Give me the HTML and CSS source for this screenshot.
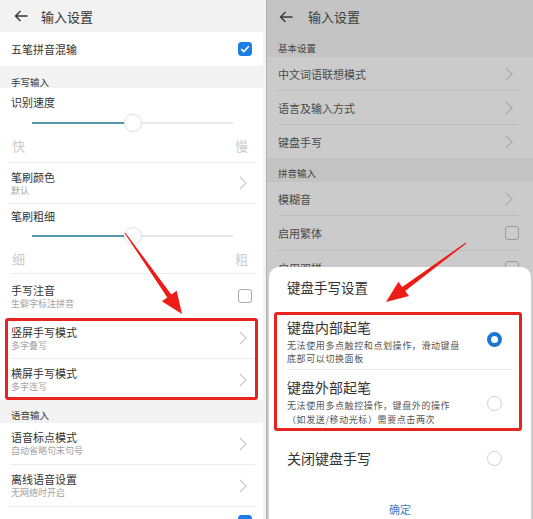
FILE: index.html
```html
<!DOCTYPE html>
<html lang="zh-CN">
<head>
<meta charset="utf-8">
<title>输入设置</title>
<link rel="stylesheet" href="styles.css">
</head>
<body>
<div class="page">
  <section class="phone left">
    <header class="bar">
      <svg class="back" width="14" height="12" viewBox="0 0 14 12"><path d="M13.5 6H1.5M6.5 1L1.5 6l5 5" stroke="#333" stroke-width="1.4" fill="none"/></svg>
      <span>输入设置</span>
    </header>
    <div class="item h34 nob"><span class="tt">五笔拼音混输</span><span class="cb on"><svg width="10" height="8" viewBox="0 0 10 8"><path d="M1.2 4l2.6 2.5L8.8 1.3" stroke="#fff" stroke-width="1.6" fill="none"/></svg></span></div>
    <div class="sec s22">手写输入</div>
    <div class="item slider-row r1">
      <div class="tt">识别速度</div>
      <div class="slider"><div class="fill" style="width:92px"></div><div class="thumb" style="left:92px"></div></div>
      <div class="ends"><span>快</span><span>慢</span></div>
    </div>
    <div class="item h41">
      <div class="txt"><div class="tt">笔刷颜色</div><div class="sub">默认</div></div>
      <svg class="chev" width="8" height="14" viewBox="0 0 8 14"><path d="M1 1l6 6-6 6" stroke="#c8c8c8" stroke-width="1.1" fill="none"/></svg>
    </div>
    <div class="item slider-row r2">
      <div class="tt">笔刷粗细</div>
      <div class="slider"><div class="fill" style="width:94px"></div><div class="thumb" style="left:92px"></div></div>
      <div class="ends"><span>细</span><span>粗</span></div>
    </div>
    <div class="item h44 nob">
      <div class="txt"><div class="tt">手写注音</div><div class="sub">生僻字标注拼音</div></div>
      <span class="cb"></span>
    </div>
    <div class="mark">
      <div class="item h41">
        <div class="txt"><div class="tt">竖屏手写模式</div><div class="sub">多字叠写</div></div>
        <svg class="chev" width="8" height="14" viewBox="0 0 8 14"><path d="M1 1l6 6-6 6" stroke="#c8c8c8" stroke-width="1.1" fill="none"/></svg>
      </div>
      <div class="item h41 nob">
        <div class="txt"><div class="tt">横屏手写模式</div><div class="sub">多字连写</div></div>
        <svg class="chev" width="8" height="14" viewBox="0 0 8 14"><path d="M1 1l6 6-6 6" stroke="#c8c8c8" stroke-width="1.1" fill="none"/></svg>
      </div>
    </div>
    <div class="sec s23">语音输入</div>
    <div class="item h42">
      <div class="txt"><div class="tt">语音标点模式</div><div class="sub">自动省略句末句号</div></div>
      <svg class="chev" width="8" height="14" viewBox="0 0 8 14"><path d="M1 1l6 6-6 6" stroke="#c8c8c8" stroke-width="1.1" fill="none"/></svg>
    </div>
    <div class="item h42">
      <div class="txt"><div class="tt">离线语音设置</div><div class="sub">无网络时开启</div></div>
      <svg class="chev" width="8" height="14" viewBox="0 0 8 14"><path d="M1 1l6 6-6 6" stroke="#c8c8c8" stroke-width="1.1" fill="none"/></svg>
    </div>
    <div class="item h34 nob end"><span class="cb on"></span></div>
  </section>

  <section class="phone right">
    <header class="bar">
      <svg class="back" width="14" height="12" viewBox="0 0 14 12"><path d="M13.5 6H1.5M6.5 1L1.5 6l5 5" stroke="#3a3a3a" stroke-width="1.4" fill="none"/></svg>
      <span>输入设置</span>
    </header>
    <div class="sec s24">基本设置</div>
    <div class="item h34"><span class="tt">中文词语联想模式</span><svg class="chev" width="8" height="14" viewBox="0 0 8 14"><path d="M1 1l6 6-6 6" stroke="#a9a9a9" stroke-width="1.1" fill="none"/></svg></div>
    <div class="item h34"><span class="tt">语言及输入方式</span><svg class="chev" width="8" height="14" viewBox="0 0 8 14"><path d="M1 1l6 6-6 6" stroke="#a9a9a9" stroke-width="1.1" fill="none"/></svg></div>
    <div class="item h33 nob"><span class="tt">键盘手写</span><svg class="chev" width="8" height="14" viewBox="0 0 8 14"><path d="M1 1l6 6-6 6" stroke="#a9a9a9" stroke-width="1.1" fill="none"/></svg></div>
    <div class="sec s24">拼音输入</div>
    <div class="item h34"><span class="tt">模糊音</span><svg class="chev" width="8" height="14" viewBox="0 0 8 14"><path d="M1 1l6 6-6 6" stroke="#a9a9a9" stroke-width="1.1" fill="none"/></svg></div>
    <div class="item h35"><span class="tt">启用繁体</span><span class="cb"></span></div>
    <div class="item h34"><span class="tt">启用双拼</span><span class="cb"></span></div>

    <div class="dialog">
      <div class="dtitle">键盘手写设置</div>
      <div class="dgroup">
        <div class="opt o1">
          <div class="otext">
            <div class="otitle">键盘内部起笔</div>
            <div class="odesc">无法使用多点触控和点划操作，滑动键盘<br>底部可以切换面板</div>
          </div>
          <span class="radio on"></span>
        </div>
        <div class="ddiv"></div>
        <div class="opt o2">
          <div class="otext">
            <div class="otitle">键盘外部起笔</div>
            <div class="odesc">无法使用多点触控操作，键盘外的操作<br>（如发送/移动光标）需要点击两次</div>
          </div>
          <span class="radio"></span>
        </div>
      </div>
      <div class="opt o3">
        <div class="otext"><div class="otitle">关闭键盘手写</div></div>
        <span class="radio"></span>
      </div>
      <div class="ok">确定</div>
    </div>
  </section>
</div>

<svg class="arrows" width="533" height="519" viewBox="0 0 533 519">
  <polygon fill="#ee1c17" points="124.6,233.3 125.4,232.7 171.3,294.6 176.7,290.8 182,314 161.9,301.2 167.3,297.4"/>
  <polygon fill="#ee1c17" points="466.3,243.4 465.7,242.6 402.2,286.9 398.4,281.7 386,302 409,296.1 405.2,290.9"/>
</svg>
</body>
</html>
```

FILE: styles.css
```css
* { box-sizing: border-box; margin: 0; padding: 0; }

body {
  width: 533px;
  height: 519px;
  overflow: hidden;
  position: relative;
  background: #f3f3f3;
  font-family: "Noto Sans CJK SC", "Noto Sans", sans-serif;
  color: #333;
}

.page {
  display: flex;
  gap: 3px;
  height: 519px;
}

.phone { overflow: hidden; }

.left {
  width: 263px;
  background: #fff;
}

.right {
  width: 267px;
  background: #cbcbcb;
  border-left: 1px solid #b2b2b2;
  position: relative;
}

/* header */
.bar {
  height: 32px;
  display: flex;
  align-items: center;
  gap: 13px;
  padding-left: 14px;
  background: #f2f2f2;
  font-size: 13px;
  color: #333;
}
.right .bar {
  height: 33px;
  background: #c4c4c4;
  padding-left: 12px;
  gap: 15px;
  color: #3c3c3c;
}
.back { display: block; }

/* section headers */
.sec {
  display: flex;
  align-items: flex-end;
  padding-left: 11px;
  background: #f3f3f3;
  font-size: 9.5px;
  line-height: 12px;
  color: #3a3a3a;
}
.s22 { height: 22px; }
.s23 { height: 23px; padding-bottom: 2px; }
.right .sec {
  background: #c3c3c3;
  color: #444;
  padding-bottom: 3px;
}
.s24 { height: 24px; }

/* rows */
.item {
  margin: 0 8px 0 10px;
  padding-left: 1px;
  display: flex;
  align-items: center;
  justify-content: space-between;
  border-bottom: 1px solid #ececec;
}
.right .item {
  margin: 0 14px 0 11px;
  padding-left: 0;
  border-bottom-color: #bcbcbc;
}
.nob { border-bottom: none; }
.h33 { height: 33px; }
.h34 { height: 34px; }
.h35 { height: 35px; }
.h41 { height: 41px; }
.h42 { height: 42px; }
.h44 { height: 44px; }

.tt {
  font-size: 11px;
  line-height: 14px;
  color: #333;
}
.right .tt { color: #4a4a4a; }
.sub {
  font-size: 9px;
  line-height: 13px;
  color: #a3a3a3;
}

.chev { display: block; margin-right: 8px; }
.right .chev { margin-right: 6px; }

/* checkbox */
.cb {
  width: 14px;
  height: 14px;
  border: 1.3px solid #a8a8a8;
  border-radius: 3px;
  margin-right: 3px;
  display: flex;
  align-items: center;
  justify-content: center;
}
.cb.on {
  background: #1b7fe3;
  border-color: #1b7fe3;
}
.right .cb {
  border-color: #9b9b9b;
  margin-right: 0;
}
.end { justify-content: flex-end; align-items: flex-start; padding-top: 8px; }

/* slider rows */
.slider-row {
  flex-direction: column;
  align-items: stretch;
  justify-content: flex-start;
}
.r1 { height: 75px; padding-top: 7px; }
.r2 { height: 70px; padding-top: 5px; }
.r1 .slider { margin-top: 5px; }
.r2 .slider { margin-top: 4px; }
.slider {
  position: relative;
  height: 18px;
  margin: 0 22px 0 21px;
}
.slider::before {
  content: "";
  position: absolute;
  left: 0;
  right: 0;
  top: 8px;
  height: 2px;
  background: #e8e8e8;
}
.fill {
  position: absolute;
  left: 0;
  top: 8px;
  height: 2px;
  background: #5597ad;
}
.thumb {
  position: absolute;
  top: 0;
  width: 18px;
  height: 18px;
  border-radius: 50%;
  background: #fff;
  border: 1px solid #e3e3e3;
  box-shadow: 0 0 2px rgba(0,0,0,0.08);
}
.ends {
  display: flex;
  justify-content: space-between;
  margin: 6px 7px 0 1px;
  font-size: 13px;
  line-height: 16px;
  color: #cdcdcd;
}

/* red highlight on left */
.mark { position: relative; }
.mark::after {
  content: "";
  position: absolute;
  left: 5px;
  right: 5px;
  top: 0;
  bottom: 0;
  border: 3px solid #e52420;
  border-radius: 3px;
}

/* dialog */
.dialog {
  position: absolute;
  top: 267px;
  left: 2px;
  right: 2px;
  bottom: 0;
  background: #fff;
  border-radius: 10px 10px 0 0;
}
.dtitle {
  padding: 11px 0 0 18px;
  font-size: 13.5px;
  line-height: 18px;
  color: #333;
  height: 45px;
}
.dgroup {
  position: relative;
}
.dgroup::after {
  content: "";
  position: absolute;
  left: 5px;
  right: 9px;
  top: 0;
  bottom: 0;
  border: 3px solid #e52420;
  border-radius: 3px;
}
.opt {
  display: flex;
  align-items: center;
  justify-content: space-between;
  padding: 0 29px 0 18px;
}
.o1 { height: 57px; padding-top: 2px; }
.o2 { height: 61px; padding-top: 3px; }
.o3 { height: 54px; }
.otitle {
  font-size: 14px;
  line-height: 19px;
  color: #333;
}
.odesc {
  margin-top: 2px;
  font-size: 9px;
  letter-spacing: 0.6px;
  line-height: 13.2px;
  color: #555;
}
.ddiv {
  height: 1px;
  background: #e8e8e8;
  margin: 0 18px;
}
.radio {
  width: 15px;
  height: 15px;
  border-radius: 50%;
  border: 1px solid #cfcfcf;
  flex: none;
}
.radio.on {
  border: 4px solid #1b78d2;
}
.o1 .radio { margin-top: -4px; }
.o2 .radio { margin-top: 2px; }
.ok {
  text-align: center;
  font-size: 11px;
  line-height: 16px;
  color: #3a7fc6;
  padding-top: 16px;
}

/* annotation arrows */
.arrows {
  position: absolute;
  left: 0;
  top: 0;
  pointer-events: none;
}
```
